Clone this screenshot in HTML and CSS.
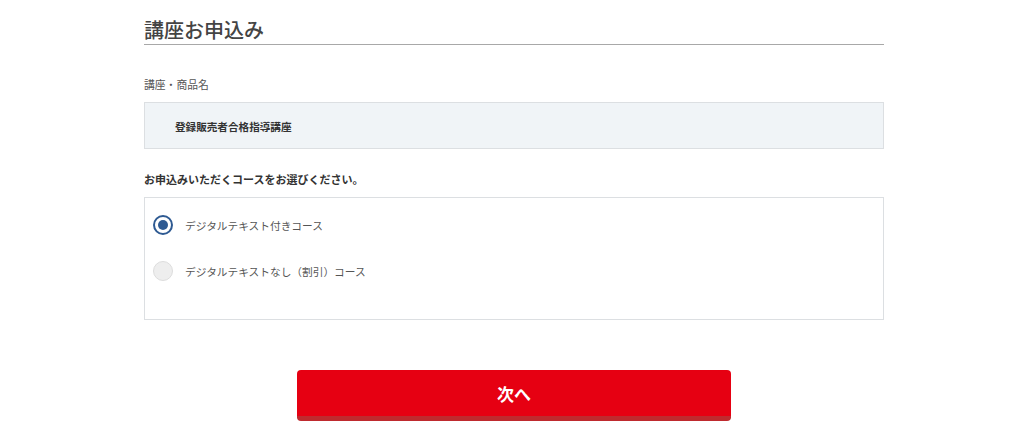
FILE: index.html
```html
<!DOCTYPE html>
<html lang="ja">
<head>
    <meta charset="UTF-8">
    <meta name="viewport" content="width=device-width, initial-scale=1.0">
    <title>講座お申込み</title>
    <link rel="stylesheet" href="styles.css">
</head>
<body>
    <div class="page">
        <h1 class="page-title">講座お申込み</h1>

        <div class="field">
            <p class="field-label">講座・商品名</p>
            <div class="product-box">登録販売者合格指導講座</div>
        </div>

        <div class="field">
            <p class="field-question">お申込みいただくコースをお選びください。</p>
            <div class="course-box">
                <label class="course-option">
                    <input type="radio" name="course" checked>
                    <span class="radio-mark"></span>
                    <span class="course-text">デジタルテキスト付きコース</span>
                </label>
                <label class="course-option">
                    <input type="radio" name="course">
                    <span class="radio-mark"></span>
                    <span class="course-text">デジタルテキストなし（割引）コース</span>
                </label>
            </div>
        </div>

        <div class="actions">
            <button class="next-button">次へ</button>
        </div>
    </div>
</body>
</html>
```

FILE: styles.css
```css
:root {
    --text-main: #333333;
    --text-title: #444444;
    --text-sub: #555555;
    --line-title: #a8a8a8;
    --box-border: #dcdfe2;
    --box-bg: #f0f4f7;
    --radio-on: #2e5a92;
    --radio-off-bg: #eeeeee;
    --radio-off-border: #dddddd;
    --red: #e60012;
    --red-dark: #bf2a2e;
}

body {
    margin: 0;
    padding: 0;
    background: #ffffff;
    color: var(--text-main);
    font-family: "Noto Sans CJK JP", "Noto Sans", sans-serif;
}

.page {
    width: 740px;
    margin-left: 144px;
    padding-top: 16px;
}

.page-title {
    margin: 0;
    font-size: 20px;
    line-height: 28px;
    font-weight: 500;
    color: var(--text-title);
    border-bottom: 1px solid var(--line-title);
}

.field-label {
    margin: 31px 0 10px;
    font-size: 10.8px;
    line-height: 16px;
    color: var(--text-sub);
}

.product-box {
    height: 45px;
    line-height: 47px;
    padding-left: 30px;
    background: var(--box-bg);
    border: 1px solid var(--box-border);
    font-size: 10.6px;
    font-weight: bold;
}

.field-question {
    margin: 21px 0 9px;
    font-size: 11px;
    line-height: 18px;
    font-weight: bold;
}

.course-box {
    height: 123px;
    border: 1px solid var(--box-border);
    padding: 17px 0 0 8px;
    box-sizing: border-box;
    display: flex;
    flex-direction: column;
    gap: 26px;
}

.course-option {
    display: flex;
    align-items: center;
    gap: 12px;
    height: 20px;
    cursor: pointer;
}

.course-option input {
    display: none;
}

.radio-mark {
    width: 20px;
    height: 20px;
    box-sizing: border-box;
    border-radius: 50%;
    background: var(--radio-off-bg);
    border: 1px solid var(--radio-off-border);
    position: relative;
}

.course-option input:checked + .radio-mark {
    background: #ffffff;
    border: 2px solid var(--radio-on);
}

.course-option input:checked + .radio-mark::after {
    content: "";
    position: absolute;
    top: 3px;
    left: 3px;
    width: 10px;
    height: 10px;
    border-radius: 50%;
    background: var(--radio-on);
}

.course-text {
    font-size: 10.7px;
    color: var(--text-sub);
}

.actions {
    display: flex;
    justify-content: center;
    margin-top: 50px;
}

.next-button {
    width: 434px;
    height: 51px;
    border: none;
    border-bottom: 5px solid var(--red-dark);
    border-radius: 4px;
    background: var(--red);
    color: #ffffff;
    font-family: inherit;
    font-size: 17px;
    font-weight: bold;
    padding: 0;
    cursor: pointer;
}
```
